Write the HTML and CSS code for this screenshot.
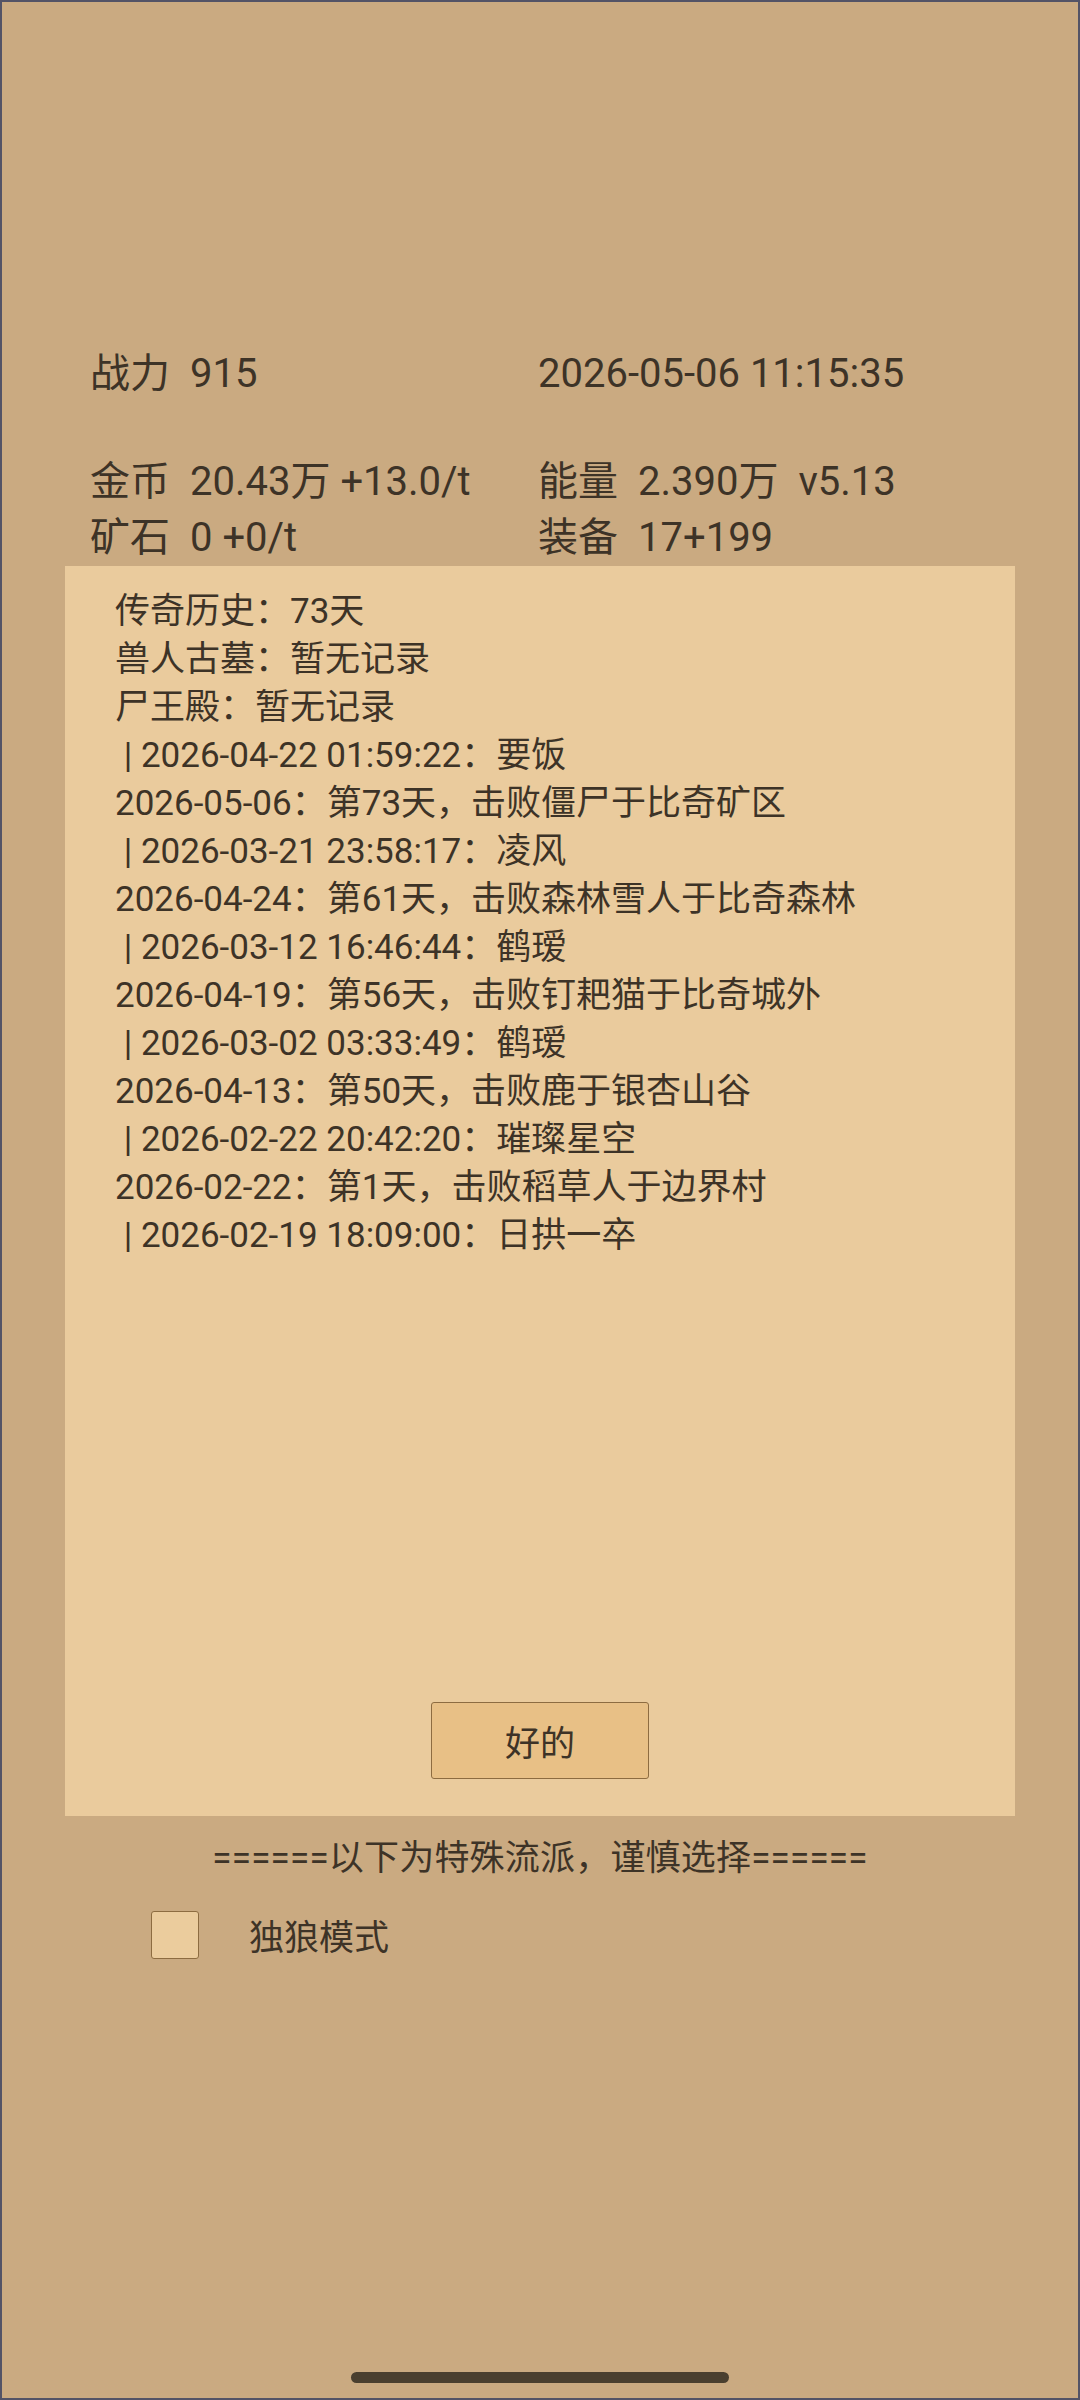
FILE: index.html
```html
<!DOCTYPE html>
<html lang="zh-CN">
<head>
    <meta charset="UTF-8">
    <meta name="viewport" content="width=device-width, initial-scale=1.0">
    <title>传奇历史</title>
    <link rel="stylesheet" href="styles.css">
</head>
<body>
    <div class="screen">
        <div class="stats">
            <div class="stat first"><span class="label">战力</span><span class="value">915</span></div>
            <div class="stat first"><span class="value-time">2026-05-06 11:15:35</span></div>
            <div class="stat"><span class="label">金币</span><span class="value">20.43万 +13.0/t</span></div>
            <div class="stat"><span class="label">能量</span><span class="value">2.390万</span><span class="value">v5.13</span></div>
            <div class="stat"><span class="label">矿石</span><span class="value">0 +0/t</span></div>
            <div class="stat"><span class="label">装备</span><span class="value">17+199</span></div>
        </div>

        <div class="dialog">
            <div class="history">
                <div class="line">传奇历史：73天</div>
                <div class="line">兽人古墓：暂无记录</div>
                <div class="line">尸王殿：暂无记录</div>
                <div class="line"> | 2026-04-22 01:59:22：要饭</div>
                <div class="line">2026-05-06：第73天，击败僵尸于比奇矿区</div>
                <div class="line"> | 2026-03-21 23:58:17：凌风</div>
                <div class="line">2026-04-24：第61天，击败森林雪人于比奇森林</div>
                <div class="line"> | 2026-03-12 16:46:44：鹤瑷</div>
                <div class="line">2026-04-19：第56天，击败钉耙猫于比奇城外</div>
                <div class="line"> | 2026-03-02 03:33:49：鹤瑷</div>
                <div class="line">2026-04-13：第50天，击败鹿于银杏山谷</div>
                <div class="line"> | 2026-02-22 20:42:20：璀璨星空</div>
                <div class="line">2026-02-22：第1天，击败稻草人于边界村</div>
                <div class="line"> | 2026-02-19 18:09:00：日拱一卒</div>
            </div>
            <button class="btn" id="ok-btn">好的</button>
        </div>

        <div class="notice">======以下为特殊流派，谨慎选择======</div>

        <label class="option">
            <span class="check"></span>
            <span class="option-text">独狼模式</span>
        </label>

        <div class="home-bar"></div>
    </div>
</body>
</html>
```

FILE: styles.css
```css
body {
    margin: 0;
    padding: 0;
    font-family: Roboto, "Noto Sans CJK SC", sans-serif;
    color: #3d3327;
    background-color: #caaa81;
}
.screen {
    width: 1080px;
    height: 2400px;
    box-sizing: border-box;
    border: 2px solid #535366;
    background-color: #caaa81;
    display: flex;
    flex-direction: column;
}
.stats {
    display: grid;
    grid-template-columns: 448px 1fr;
    padding: 344px 0 0 88px;
    font-size: 40px;
}
.stat {
    height: 56px;
    line-height: 56px;
    white-space: nowrap;
}
.stat.first {
    margin-bottom: 52px;
}
.stat .label {
    margin-right: 20px;
}
.stat .value + .value {
    margin-left: 20px;
}
.dialog {
    margin: 0 63px;
    height: 1250px;
    box-sizing: border-box;
    padding: 22px 50px 37px;
    background-color: #eacb9d;
    display: flex;
    flex-direction: column;
}
.history {
    font-size: 35px;
    line-height: 48px;
}
.line {
    white-space: pre;
}
.btn {
    margin-top: auto;
    align-self: center;
    width: 218px;
    height: 77px;
    font-family: inherit;
    font-size: 35px;
    color: #3d3327;
    background-color: #e8c086;
    border: 1px solid #8d6c41;
    border-radius: 3px;
    cursor: pointer;
}
.notice {
    margin-top: 19px;
    text-align: center;
    font-size: 35px;
    line-height: 48px;
    letter-spacing: 0.2px;
}
.option {
    display: flex;
    align-items: center;
    margin: 26px 0 0 149px;
    font-size: 35px;
}
.check {
    width: 46px;
    height: 46px;
    background-color: #ebcc9d;
    border: 1px solid #8d6c41;
    border-radius: 3px;
}
.option-text {
    margin-left: 50px;
}
.home-bar {
    margin: auto auto 15px;
    width: 378px;
    height: 11px;
    border-radius: 6px;
    background-color: #4a3f2f;
}
```
